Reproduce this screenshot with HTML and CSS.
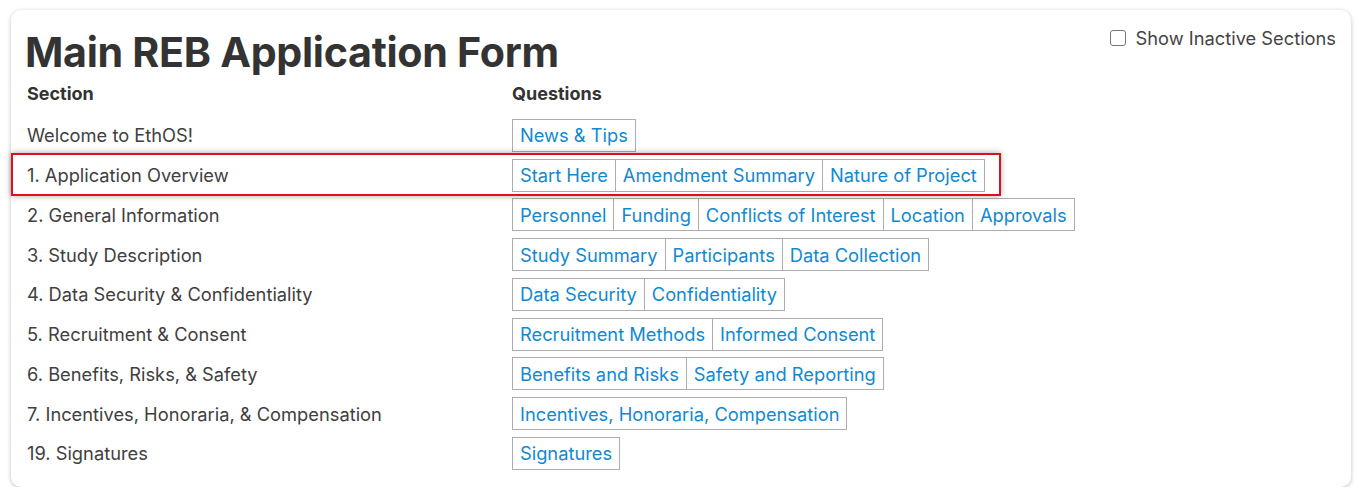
FILE: index.html
```html
<!DOCTYPE html>
<html>
<head>
<meta charset="utf-8">
<link rel="stylesheet" href="styles.css">
</head>
<body>
<div class="card">
  <div class="top">
    <h1 class="title">Main REB Application Form</h1>
    <label class="toggle"><span class="box"></span>Show Inactive Sections</label>
  </div>
  <div class="grid">
    <div class="head">Section</div>
    <div class="head">Questions</div>

    <div class="sec">Welcome to EthOS!</div>
    <div class="qs"><a class="q">News &amp; Tips</a></div>

    <div class="sec">1. Application Overview</div>
    <div class="qs"><a class="q">Start Here</a><a class="q">Amendment Summary</a><a class="q">Nature of Project</a></div>

    <div class="sec">2. General Information</div>
    <div class="qs"><a class="q">Personnel</a><a class="q">Funding</a><a class="q">Conflicts of Interest</a><a class="q">Location</a><a class="q">Approvals</a></div>

    <div class="sec">3. Study Description</div>
    <div class="qs"><a class="q">Study Summary</a><a class="q">Participants</a><a class="q">Data Collection</a></div>

    <div class="sec">4. Data Security &amp; Confidentiality</div>
    <div class="qs"><a class="q">Data Security</a><a class="q">Confidentiality</a></div>

    <div class="sec">5. Recruitment &amp; Consent</div>
    <div class="qs"><a class="q">Recruitment Methods</a><a class="q">Informed Consent</a></div>

    <div class="sec">6. Benefits, Risks, &amp; Safety</div>
    <div class="qs"><a class="q">Benefits and Risks</a><a class="q">Safety and Reporting</a></div>

    <div class="sec">7. Incentives, Honoraria, &amp; Compensation</div>
    <div class="qs"><a class="q">Incentives, Honoraria, Compensation</a></div>

    <div class="sec">19. Signatures</div>
    <div class="qs"><a class="q">Signatures</a></div>
  </div>
  <div class="highlight"></div>
</div>
</body>
</html>
```

FILE: styles.css
```css
html, body {
  margin: 0;
  padding: 0;
  background: #fff;
}
body {
  font-family: Inter, "Noto Sans", sans-serif;
  color: #3a3a3a;
}
.card {
  position: relative;
  margin: 10px 8px 0 11px;
  height: 477px;
  box-sizing: border-box;
  border-radius: 10px;
  background: #fff;
  box-shadow: 0 1px 4px rgba(0,0,0,0.25);
  padding: 18px 15px 0 14px;
}
.top {
  display: flex;
  justify-content: space-between;
  align-items: flex-start;
}
.title {
  margin: 0;
  font-size: 41.2px;
  font-weight: 700;
  color: #333;
  line-height: 48px;
  letter-spacing: -0.3px;
}
.toggle {
  display: flex;
  align-items: center;
  gap: 10px;
  font-size: 18.3px;
  color: #444;
  margin-top: -1px;
}
.box {
  width: 14px;
  height: 14px;
  border: 1.5px solid #777;
  border-radius: 3px;
}
.grid {
  display: grid;
  grid-template-columns: 485px 1fr;
  grid-auto-rows: 33px;
  row-gap: 6.75px;
  align-items: center;
  margin-top: 3px;
  padding-left: 2px;
}
.head {
  font-weight: 700;
  font-size: 18px;
  color: #333;
  align-self: start;
  line-height: 24px;
  margin-top: 3px;
}
.sec {
  font-size: 18.3px;
  color: #404040;
}
.qs {
  display: flex;
  height: 33px;
}
.q {
  display: flex;
  align-items: center;
  height: 33px;
  box-sizing: border-box;
  padding: 0 7px;
  border: 1px solid #adadad;
  color: #1189d1;
  font-size: 18.3px;
  text-decoration: none;
  cursor: pointer;
}
.q + .q {
  border-left: none;
}
.highlight {
  position: absolute;
  left: 0;
  top: 143px;
  width: 990px;
  height: 43px;
  box-sizing: border-box;
  border: 2px solid #d7141d;
  box-shadow: 0 0 6px rgba(0,0,0,0.35);
  pointer-events: none;
}
```
